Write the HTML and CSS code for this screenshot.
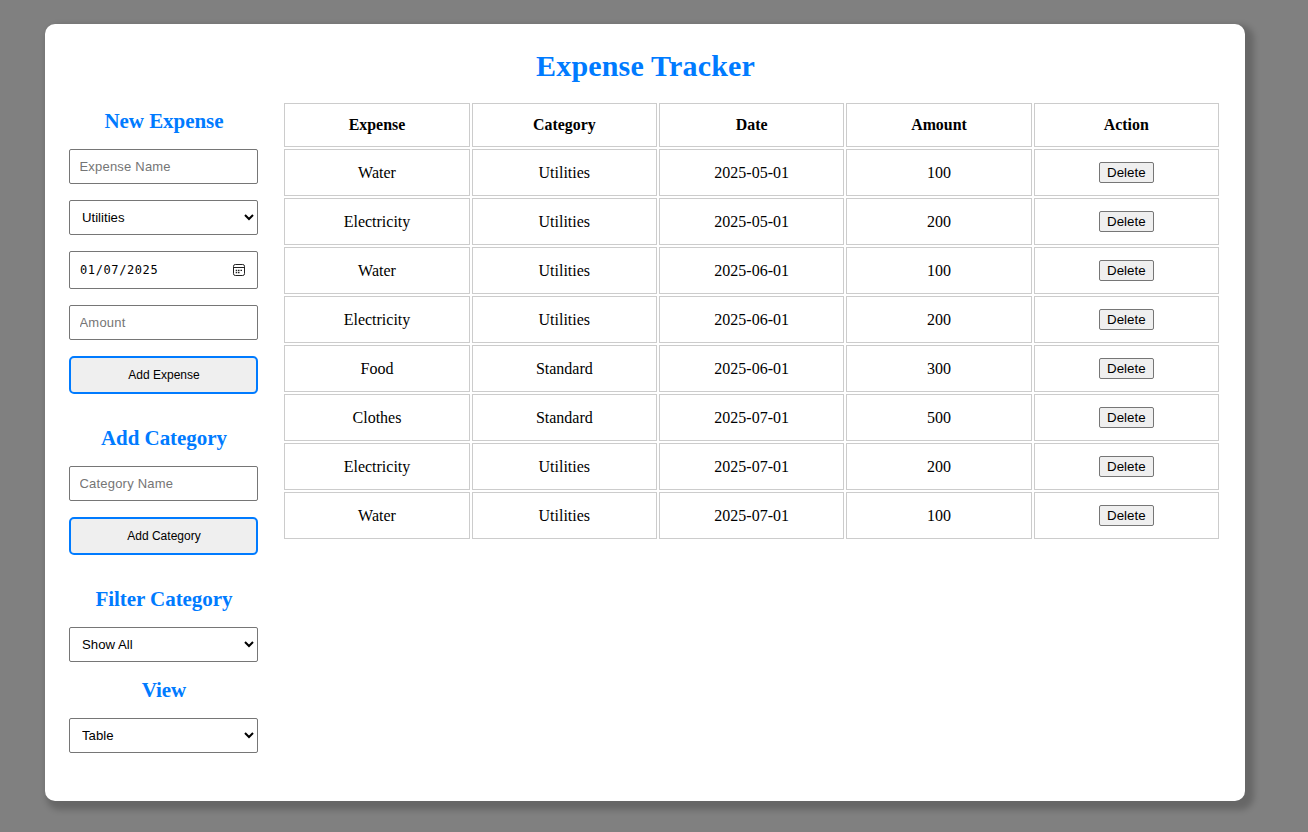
FILE: index.html
```html
<!DOCTYPE html>
<html lang="en">
<head>
<meta charset="utf-8">
<title>Expense Tracker</title>
<link rel="stylesheet" href="styles.css">
</head>
<body>
<main class="card">
  <h1 class="title">Expense Tracker</h1>
  <div class="columns">
    <aside class="sidebar">
      <section class="group">
        <h2 class="heading">New Expense</h2>
        <input class="field" type="text" placeholder="Expense Name">
        <select class="field"><option>Utilities</option><option>Standard</option></select>
        <div class="field date">
          <span class="date-value"><span>01</span><span>/</span><span>07</span><span>/</span><span>2025</span></span>
          <svg class="calendar" viewBox="0 0 14 14" width="14" height="14" fill="none" stroke="#222">
            <rect x="1.5" y="1.5" width="11" height="11" rx="1.8"/>
            <path d="M1.5 4.5h11"/>
            <path d="M6 7.3h1.5M8.5 7.3h1.5M3.7 7.3h1.5M3.7 9.5h1.5M6 9.5h1.5" stroke-width="1.3"/>
          </svg>
        </div>
        <input class="field" type="text" placeholder="Amount">
        <button class="submit">Add Expense</button>
      </section>
      <section class="group">
        <h2 class="heading">Add Category</h2>
        <input class="field" type="text" placeholder="Category Name">
        <button class="submit">Add Category</button>
      </section>
      <section class="filters">
        <h2 class="heading">Filter Category</h2>
        <select class="field"><option>Show All</option></select>
        <h2 class="heading">View</h2>
        <select class="field"><option>Table</option></select>
      </section>
    </aside>
    <table class="expenses">
      <thead><tr><th>Expense</th><th>Category</th><th>Date</th><th>Amount</th><th>Action</th></tr></thead>
      <tbody>
        <tr><td>Water</td><td>Utilities</td><td>2025-05-01</td><td>100</td><td><button class="delete">Delete</button></td></tr>
        <tr><td>Electricity</td><td>Utilities</td><td>2025-05-01</td><td>200</td><td><button class="delete">Delete</button></td></tr>
        <tr><td>Water</td><td>Utilities</td><td>2025-06-01</td><td>100</td><td><button class="delete">Delete</button></td></tr>
        <tr><td>Electricity</td><td>Utilities</td><td>2025-06-01</td><td>200</td><td><button class="delete">Delete</button></td></tr>
        <tr><td>Food</td><td>Standard</td><td>2025-06-01</td><td>300</td><td><button class="delete">Delete</button></td></tr>
        <tr><td>Clothes</td><td>Standard</td><td>2025-07-01</td><td>500</td><td><button class="delete">Delete</button></td></tr>
        <tr><td>Electricity</td><td>Utilities</td><td>2025-07-01</td><td>200</td><td><button class="delete">Delete</button></td></tr>
        <tr><td>Water</td><td>Utilities</td><td>2025-07-01</td><td>100</td><td><button class="delete">Delete</button></td></tr>
      </tbody>
    </table>
  </div>
</main>
</body>
</html>
```
FILE: styles.css
```css
* { box-sizing: border-box; }

body {
  min-height: 100vh;
  margin: 0;
  padding: 24px 0 0 45px;
  background: #808080;
  font-family: "Liberation Serif", "Times New Roman", serif;
  font-size: 16px;
}

.card {
  width: 1200px;
  height: 777px;
  padding: 24px;
  background: #fff;
  border-radius: 10px;
  box-shadow: 5px 5px 6px 4px rgba(0, 0, 0, 0.2);
}

.title {
  margin: 0;
  padding-left: 1px;
  color: #007bff;
  font-size: 30px;
  line-height: 36px;
  letter-spacing: 0.17px;
  text-align: center;
}

.columns {
  display: flex;
  align-items: flex-start;
  gap: 24.4px;
  padding-top: 17px;
}

.sidebar { width: 189px; padding-top: 8px; }

.heading {
  margin: 0 0 16px;
  padding-left: 1px;
  color: #007bff;
  font-size: 21px;
  line-height: 24px;
  letter-spacing: -0.05px;
  text-align: center;
}

.group { margin-bottom: 32px; }

.field {
  display: block;
  width: 100%;
  height: 35px;
  margin: 0 0 16px;
  padding: 0 9px;
  border: 1px solid #767676;
  border-radius: 2px;
  background: #fff;
  color: #000;
  font-family: "Liberation Sans", Arial, sans-serif;
  font-size: 13.333px;
}

select.field { padding-left: 8px; font-size: 13.2px; }
input.field { padding-left: 9.5px; font-size: 13px; letter-spacing: 0.2px; }
.field::placeholder { color: #757575; }

.date {
  display: flex;
  align-items: center;
  justify-content: space-between;
  height: 38px;
  padding: 0 11px 0 10px;
}

.date-value {
  display: flex;
  font-family: "DejaVu Sans Mono", monospace;
  font-size: 12px;
  letter-spacing: 0.6px;
}

.submit {
  display: block;
  width: 100%;
  height: 38px;
  padding: 1px 5px 1px 6px;
  border: 2px solid #007bff;
  border-radius: 5px;
  background: #efefef;
  color: #000;
  font-family: "Liberation Sans", Arial, sans-serif;
  font-size: 12px;
}

.field + .submit { margin-bottom: 16px; }

.expenses {
  width: 939px;
  table-layout: fixed;
  border-spacing: 2px;
  text-align: center;
}

.expenses th,
.expenses td {
  padding: 12px;
  border: 1px solid #ccc;
}

.expenses th { font-size: 15.9px; }

.delete {
  width: 55px;
  height: 21px;
  padding: 1px 6px;
  border: 1px solid #767676;
  border-radius: 2px;
  background: #efefef;
  color: #000;
  font-family: "Liberation Sans", Arial, sans-serif;
  font-size: 13.333px;
}
```
